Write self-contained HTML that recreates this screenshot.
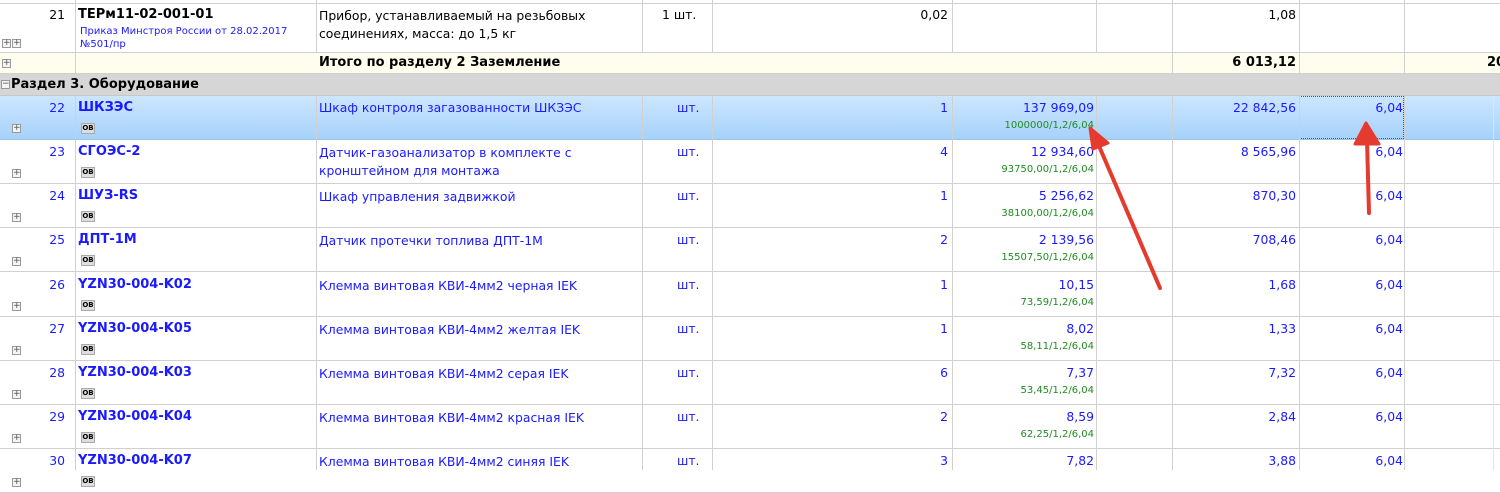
<!DOCTYPE html>
<html><head><meta charset="utf-8">
<style>
body{margin:0;width:1500px;height:470px;overflow:hidden;background:#fff;font-family:"DejaVu Sans","Liberation Sans",sans-serif;font-size:12.4px;}
.r{position:absolute;left:0;width:1500px;border-bottom:1px solid #d0d0d0;box-sizing:border-box;}
.t{position:absolute;white-space:nowrap;}
.vl{position:absolute;top:0;width:1px;background:#d0d0d0;}
.pl{position:absolute;width:9px;height:9px;border:1px solid #999;box-sizing:border-box;background:#f4f4f4;font-size:9px;line-height:7px;text-align:center;color:#555;}
.ob{position:absolute;left:81px;width:14px;height:11px;background:#ddd;border:1px solid #aaa;box-sizing:border-box;font-size:7px;line-height:9px;text-align:center;color:#000;font-weight:bold;}
.blue{color:#1a1aff}
.g{color:#1e8c1e;font-size:10px}
.b{font-weight:bold}
.rt{text-align:right}
</style></head><body>
<div style="position:absolute;top:0;left:0;width:1500px;height:3px;border-bottom:1px solid #d0d0d0"></div>

<!-- row 21 -->
<div class="r" style="top:4px;height:49px;background:#fff">
<div class="t rt" style="right:1435px;top:3px;">21</div>
<div class="t b" style="left:78px;top:3px;font-size:13px">ТЕРм11-02-001-01</div>
<div class="t blue" style="left:80px;top:21px;font-size:10px;line-height:13px">Приказ Минстроя России от 28.02.2017<br>№501/пр</div>
<div class="t" style="left:319px;top:3px;line-height:18px">Прибор, устанавливаемый на резьбовых<br>соединениях, масса: до 1,5 кг</div>
<div class="t" style="left:662px;top:3px">1 шт.</div>
<div class="t" style="right:552px;top:3px">0,02</div>
<div class="t" style="right:204px;top:3px">1,08</div>
<div class="pl" style="left:2px;top:35px">+</div><div class="pl" style="left:12px;top:35px">+</div>
</div>
<!-- total -->
<div class="r" style="top:53px;height:21px;background:#fffdee">
<div class="t b" style="left:319px;top:2px;font-size:13px">Итого по разделу 2 Заземление</div>
<div class="t b" style="right:204px;top:2px;font-size:13px">6 013,12</div>
<div class="t b" style="left:1487px;top:2px;font-size:13px">20</div>
<div class="pl" style="left:2px;top:6px">+</div>
</div>

<div id="rows"></div>
<!-- row 22 selected -->
<div class="r" style="top:96px;height:44px;background:linear-gradient(#cde6ff,#a6d2fb);border-bottom:1px solid #9cc3e6">
<div class="t blue" style="right:1435px;top:4px;">22</div>
<div class="t blue b" style="left:78px;top:4px;font-size:13px">ШКЗЭС</div>
<div class="ob" style="top:27px">ОВ</div>
<div class="t blue" style="left:319px;top:4px">Шкаф контроля загазованности ШКЗЭС</div>
<div class="t blue" style="left:677px;top:4px">шт.</div>
<div class="t blue" style="right:552px;top:4px">1</div>
<div class="t blue" style="right:406px;top:4px">137 969,09</div>
<div class="t g" style="right:406px;top:24px">1000000/1,2/6,04</div>
<div class="t blue" style="right:204px;top:4px">22 842,56</div>
<div class="t blue" style="right:97px;top:4px">6,04</div>
<div style="position:absolute;left:1299px;top:0;width:105px;height:43px;border:1px dotted #555;box-sizing:border-box"></div>
<div class="pl" style="left:12px;top:28px">+</div>
</div>

<script>
var d=[["23","СГОЭС-2","Датчик-газоанализатор в комплекте с<br>кронштейном для монтажа","4","12 934,60","93750,00/1,2/6,04","8 565,96"],
["24","ШУЗ-RS","Шкаф управления задвижкой","1","5 256,62","38100,00/1,2/6,04","870,30"],
["25","ДПТ-1М","Датчик протечки топлива ДПТ-1М","2","2 139,56","15507,50/1,2/6,04","708,46"],
["26","YZN30-004-K02","Клемма винтовая КВИ-4мм2 черная IEK","1","10,15","73,59/1,2/6,04","1,68"],
["27","YZN30-004-K05","Клемма винтовая КВИ-4мм2 желтая IEK","1","8,02","58,11/1,2/6,04","1,33"],
["28","YZN30-004-K03","Клемма винтовая КВИ-4мм2 серая IEK","6","7,37","53,45/1,2/6,04","7,32"],
["29","YZN30-004-K04","Клемма винтовая КВИ-4мм2 красная IEK","2","8,59","62,25/1,2/6,04","2,84"],
["30","YZN30-004-K07","Клемма винтовая КВИ-4мм2 синяя IEK","3","7,82","","3,88"]];
var h="";d.forEach(function(r,i){var top=140+i*44.2;
h+='<div class="r" style="top:'+top+'px;height:44px;background:#fff">'+
'<div class="t blue" style="right:1435px;top:4px">'+r[0]+'</div>'+
'<div class="t blue b" style="left:78px;top:4px;font-size:13px">'+r[1]+'</div>'+
'<div class="ob" style="top:27px">ОВ</div>'+
'<div class="t blue" style="left:319px;top:4px;line-height:18px">'+r[2]+'</div>'+
'<div class="t blue" style="left:677px;top:4px">шт.</div>'+
'<div class="t blue" style="right:552px;top:4px">'+r[3]+'</div>'+
'<div class="t blue" style="right:406px;top:4px">'+r[4]+'</div>'+
'<div class="t g" style="right:406px;top:24px">'+r[5]+'</div>'+
'<div class="t blue" style="right:204px;top:4px">'+r[6]+'</div>'+
'<div class="t blue" style="right:97px;top:4px">6,04</div>'+
'<div class="pl" style="left:12px;top:29px">+</div></div>';});
document.getElementById("rows").innerHTML=h;
</script>

<!-- vertical lines -->
<div class="vl" style="left:75px;height:74px"></div><div class="vl" style="left:75px;top:96px;height:374px"></div>
<div class="vl" style="left:316px;height:53px"></div>
<div class="vl" style="left:316px;top:96px;height:374px"></div>
<div class="vl" style="left:642px;height:53px"></div><div class="vl" style="left:642px;top:96px;height:374px"></div>
<div class="vl" style="left:712px;height:53px"></div><div class="vl" style="left:712px;top:96px;height:374px"></div>
<div class="vl" style="left:952px;height:53px"></div><div class="vl" style="left:952px;top:96px;height:374px"></div>
<div class="vl" style="left:1096px;height:53px"></div><div class="vl" style="left:1096px;top:96px;height:374px"></div>
<div class="vl" style="left:1172px;height:74px"></div><div class="vl" style="left:1172px;top:96px;height:374px"></div>
<div class="vl" style="left:1299px;height:74px"></div><div class="vl" style="left:1299px;top:96px;height:374px"></div>
<div class="vl" style="left:1404px;height:74px"></div><div class="vl" style="left:1404px;top:96px;height:374px"></div>
<div class="vl" style="left:1493px;top:96px;height:374px;background:#e4e4e4"></div>

<!-- section -->
<div class="r" style="top:74px;height:22px;background:#d6d6d6;border-bottom:1px solid #c8c8c8">
<div class="t b" style="left:11px;top:3px;font-size:13px">Раздел 3. Оборудование</div>
<div class="pl" style="left:1px;top:6px">−</div>
</div>

<svg style="position:absolute;left:0;top:0" width="1500" height="470">
<g stroke="#e53a2e" stroke-width="4" stroke-linecap="round" fill="#e53a2e">
<line x1="1160" y1="288" x2="1099" y2="146"/>
<polygon points="1090,128 1108,143 1093,149" stroke-width="3" stroke-linejoin="round"/>
<line x1="1369" y1="213" x2="1367" y2="140"/>
<polygon points="1366,123 1379,144 1355,144" stroke-width="3" stroke-linejoin="round"/>
</g></svg>
</body></html>
